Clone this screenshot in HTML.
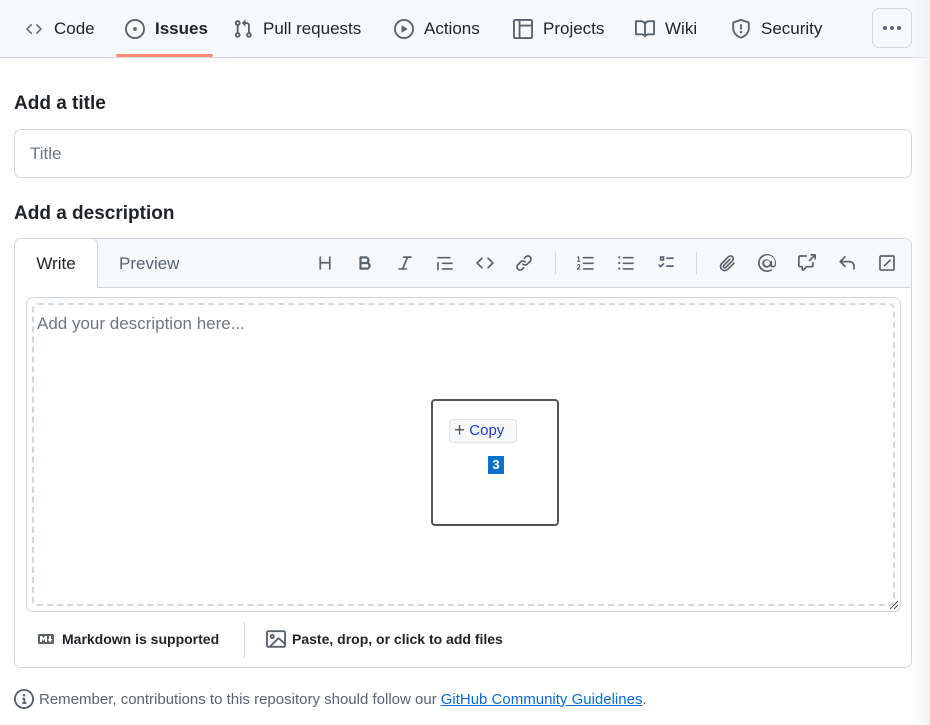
<!DOCTYPE html>
<html><head><meta charset="utf-8"><style>
*{box-sizing:border-box;margin:0;padding:0}
body{width:930px;height:725px;overflow:hidden;background:#fff;font-family:"Liberation Sans",sans-serif;color:#1f2328;position:relative}
.nav{position:absolute;left:0;top:0;width:930px;height:58px;background:#f6f8fa;border-bottom:1px solid #d0d7de}
.tab{position:absolute;top:0;height:57px;display:flex;align-items:center;font-size:17px;color:#1f2328}
.tab svg{margin-right:10px}
.ul{position:absolute;left:116px;top:54px;width:97px;height:3px;background:#fd8c73;border-radius:2px}
.more{position:absolute;left:872px;top:8px;width:40px;height:40px;border:1px solid #d0d7de;border-radius:7px;background:#f6f8fa;display:flex;align-items:center;justify-content:center;gap:3px}
.more i{width:4px;height:4px;border-radius:2px;background:#59636e}
.lbl{position:absolute;left:14px;font-size:19px;font-weight:bold;color:#1f2328}
.input{position:absolute;left:14px;top:129px;width:898px;height:49px;border:1px solid #d0d7de;border-radius:7px;padding:0 15px;line-height:47px;font-size:17px;color:#6e7781}
.ed{position:absolute;left:14px;top:238px;width:898px;height:430px;border:1px solid #d0d7de;border-radius:7px;overflow:hidden}
.edh{position:absolute;left:0;top:0;width:896px;height:49px;background:#f6f8fa;border-bottom:1px solid #d0d7de}
.wt{position:absolute;left:-1px;top:-1px;width:84px;height:50px;background:#fff;border:1px solid #d0d7de;border-bottom:none;border-radius:7px 7px 0 0;font-size:17px;text-align:center;line-height:50px}
.pv{position:absolute;left:104px;top:0;line-height:49px;font-size:17px;color:#59636e}
.ic{position:absolute;top:15px}
.sep{position:absolute;top:13px;width:1px;height:22px;background:#d0d7de}
.ta{position:absolute;left:11px;top:58px;width:875px;height:315px;border:1px solid #d0d7de;border-radius:7px}
.dash{position:absolute;left:5px;top:5px;width:863px;height:303px;border:2px dashed #d0d7de;border-radius:6px}
.ph{position:absolute;left:22px;top:75px;font-size:17px;color:#6e7781}
.ft{position:absolute;top:388px;height:24px;font-size:14px;font-weight:bold;display:flex;align-items:center;color:#1f2328}
.note{position:absolute;left:14px;top:689px;font-size:15px;color:#59636e;display:flex;align-items:center}
.note a{color:#0969da;text-decoration:underline;margin-left:4px}
</style></head><body>
<div class="nav">
<div class="tab" style="left:24px"><svg width="20" height="16" viewBox="0 0 16 16" fill="#59636e"><path d="m11.28 3.22 4.25 4.25a.75.75 0 0 1 0 1.06l-4.25 4.25a.749.749 0 0 1-1.275-.326.749.749 0 0 1 .215-.734L13.94 8l-3.72-3.720a.749.749 0 0 1 .326-1.275.749.749 0 0 1 .734.215Zm-6.56 0a.751.751 0 0 1 1.042.018.751.751 0 0 1 .018 1.042L2.060 8l3.72 3.72a.749.749 0 0 1-.326 1.275.749.749 0 0 1-.734-.215L.47 8.53a.75.75 0 0 1 0-1.06Z"/></svg>Code</div>
<div class="tab" style="left:125px;font-weight:bold"><svg width="20" height="20" viewBox="0 0 16 16" fill="#59636e"><path d="M8 9.5a1.5 1.5 0 1 0 0-3 1.5 1.5 0 0 0 0 3Z"/><path d="M8 0a8 8 0 1 1 0 16A8 8 0 0 1 8 0ZM1.5 8a6.5 6.5 0 1 0 13 0 6.5 6.5 0 0 0-13 0Z"/></svg>Issues</div>
<div class="tab" style="left:233px"><svg width="20" height="20" viewBox="0 0 16 16" fill="#59636e"><path d="M1.5 3.25a2.25 2.25 0 1 1 3 2.122v5.256a2.251 2.251 0 1 1-1.5 0V5.372A2.25 2.25 0 0 1 1.5 3.25Zm5.677-.177L9.573.677A.25.25 0 0 1 10 .854V2.5h1A2.5 2.5 0 0 1 13.5 5v5.628a2.251 2.251 0 1 1-1.5 0V5a1 1 0 0 0-1-1h-1v1.646a.25.25 0 0 1-.427.177L7.177 3.427a.25.25 0 0 1 0-.354ZM3.75 2.5a.75.75 0 1 0 0 1.5.75.75 0 0 0 0-1.5Zm0 9.5a.75.75 0 1 0 0 1.5.75.75 0 0 0 0-1.5Zm8.25.75a.75.75 0 1 0 1.5 0 .75.75 0 0 0-1.5 0Z"/></svg>Pull requests</div>
<div class="tab" style="left:394px"><svg width="20" height="20" viewBox="0 0 16 16" fill="#59636e"><path d="M8 0a8 8 0 1 1 0 16A8 8 0 0 1 8 0ZM1.5 8a6.5 6.5 0 1 0 13 0 6.5 6.5 0 0 0-13 0Zm4.879-2.773 4.264 2.559a.25.25 0 0 1 0 .428l-4.264 2.559A.25.25 0 0 1 6 10.559V5.442a.25.25 0 0 1 .379-.215Z"/></svg>Actions</div>
<div class="tab" style="left:513px"><svg width="20" height="20" viewBox="0 0 16 16" fill="#59636e"><path d="M1.75 0h12.5C15.216 0 16 .784 16 1.75v12.5A1.75 1.75 0 0 1 14.25 16H1.75A1.75 1.75 0 0 1 0 14.25V1.75C0 .784.784 0 1.75 0ZM1.5 1.750v12.5c0 .138.112.25.25.25H4.5v-13H1.75a.25.25 0 0 0-.25.25ZM6 14.5h8.25a.25.25 0 0 0 .25-.25V6H6Zm8.5-10v-2.75a.25.25 0 0 0-.25-.25H6v3Z"/></svg>Projects</div>
<div class="tab" style="left:635px"><svg width="20" height="20" viewBox="0 0 16 16" fill="#59636e"><path d="M0 1.75A.75.75 0 0 1 .75 1h4.253c1.227 0 2.317.59 3 1.501A3.743 3.743 0 0 1 11.006 1h4.245a.75.75 0 0 1 .75.75v10.5a.75.75 0 0 1-.75.75h-4.507a2.25 2.25 0 0 0-1.591.659l-.622.621a.75.75 0 0 1-1.06 0l-.622-.621A2.25 2.25 0 0 0 5.258 13H.75a.75.75 0 0 1-.75-.75Zm7.251 10.324.004-5.073-.002-2.253A2.25 2.25 0 0 0 5.003 2.5H1.5v9h3.757a3.75 3.75 0 0 1 1.994.574ZM8.755 4.75l-.004 7.322a3.752 3.752 0 0 1 1.992-.572H14.5v-9h-3.495a2.25 2.25 0 0 0-2.25 2.25Z"/></svg>Wiki</div>
<div class="tab" style="left:731px"><svg width="20" height="20" viewBox="0 0 16 16" fill="#59636e"><path d="M7.467.133a1.748 1.748 0 0 1 1.066 0l5.25 1.68A1.75 1.75 0 0 1 15 3.48V7c0 1.566-.32 3.182-1.303 4.682-.983 1.498-2.585 2.813-5.032 3.855a1.697 1.697 0 0 1-1.33 0c-2.447-1.042-4.049-2.357-5.032-3.855C1.32 10.182 1 8.566 1 7V3.48a1.755 1.755 0 0 1 1.217-1.667Zm.61 1.429a.25.25 0 0 0-.153 0l-5.25 1.68a.25.25 0 0 0-.174.238V7c0 1.358.275 2.666 1.057 3.86.784 1.194 2.121 2.34 4.366 3.297a.196.196 0 0 0 .154 0c2.245-.956 3.582-2.104 4.366-3.298C13.225 9.666 13.5 8.36 13.5 7V3.48a.251.251 0 0 0-.174-.237l-5.25-1.68ZM8.75 4.75v3a.75.75 0 0 1-1.5 0v-3a.75.75 0 0 1 1.5 0ZM9 10.5a1 1 0 1 1-2 0 1 1 0 0 1 2 0Z"/></svg>Security</div>
<div class="ul"></div>
<div class="more"><i></i><i></i><i></i></div>
</div>
<div class="lbl" style="top:93px">Add a title</div>
<div class="input">Title</div>
<div class="lbl" style="top:203px">Add a description</div>
<div class="ed">
<div class="edh">
<div class="wt">Write</div><div class="pv">Preview</div>
<svg class="ic" style="left:301px" width="18" height="18" viewBox="0 0 16 16" fill="#59636e"><path d="M3.75 2a.75.75 0 0 1 .75.75V7h7V2.75a.75.75 0 0 1 1.5 0v10.5a.75.75 0 0 1-1.5 0V8.5h-7v4.75a.75.75 0 0 1-1.5 0V2.75A.75.75 0 0 1 3.75 2Z"/></svg>
<svg class="ic" style="left:341px" width="18" height="18" viewBox="0 0 16 16" fill="#59636e"><path d="M4 2h4.5a3.501 3.501 0 0 1 2.852 5.53A3.499 3.499 0 0 1 9.5 14H4a1 1 0 0 1-1-1V3a1 1 0 0 1 1-1Zm1 7v3h4.5a1.5 1.5 0 0 0 0-3Zm3.5-2a1.5 1.5 0 0 0 0-3H5v3Z"/></svg>
<svg class="ic" style="left:381px" width="18" height="18" viewBox="0 0 16 16" fill="#59636e"><path d="M6 2.75A.75.75 0 0 1 6.75 2h6.5a.75.75 0 0 1 0 1.5h-2.505l-3.858 9H9.25a.75.75 0 0 1 0 1.5h-6.5a.75.75 0 0 1 0-1.5h2.505l3.858-9H6.75A.75.75 0 0 1 6 2.75Z"/></svg>
<svg class="ic" style="left:420px" width="20" height="18" viewBox="0 0 16 16" fill="#59636e"><path d="M1.75 2.5h10.5a.75.75 0 0 1 0 1.5H1.75a.75.75 0 0 1 0-1.5Zm4 5h8.5a.75.75 0 0 1 0 1.5h-8.5a.75.75 0 0 1 0-1.5Zm0 5h8.5a.75.75 0 0 1 0 1.5h-8.5a.75.75 0 0 1 0-1.5ZM2.5 7.75v6a.75.75 0 0 1-1.5 0v-6a.75.75 0 0 1 1.5 0Z"/></svg>
<svg class="ic" style="left:460px" width="20" height="18" viewBox="0 0 16 16" fill="#59636e"><path d="m11.28 3.22 4.25 4.25a.75.75 0 0 1 0 1.06l-4.25 4.25a.749.749 0 0 1-1.06-1.06L13.94 8l-3.72-3.72a.749.749 0 0 1 1.06-1.06Zm-6.56 0a.75.75 0 0 1 1.06 1.06L2.06 8l3.72 3.72a.749.749 0 0 1-1.06 1.06L.47 8.53a.75.75 0 0 1 0-1.06Z"/></svg>
<svg class="ic" style="left:500px" width="18" height="18" viewBox="0 0 16 16" fill="#59636e"><path d="m7.775 3.275 1.25-1.25a3.5 3.5 0 1 1 4.95 4.95l-2.5 2.5a3.5 3.5 0 0 1-4.95 0 .751.751 0 0 1 .018-1.042.751.751 0 0 1 1.042-.018 1.998 1.998 0 0 0 2.83 0l2.5-2.5a2.002 2.002 0 0 0-2.83-2.83l-1.25 1.25a.751.751 0 0 1-1.042-.018.751.751 0 0 1-.018-1.042Zm-4.69 9.64a1.998 1.998 0 0 0 2.83 0l1.25-1.25a.751.751 0 0 1 1.042.018.751.751 0 0 1 .018 1.042l-1.25 1.25a3.5 3.5 0 1 1-4.95-4.95l2.5-2.5a3.5 3.5 0 0 1 4.95 0 .751.751 0 0 1-.018 1.042.751.751 0 0 1-1.042.018 1.998 1.998 0 0 0-2.83 0l-2.5 2.5a1.998 1.998 0 0 0 0 2.83Z"/></svg>
<div class="sep" style="left:540px"></div>
<svg class="ic" style="left:561px" width="20" height="18" viewBox="0 0 16 16" fill="#59636e"><path d="M5 3.25a.75.75 0 0 1 .75-.75h8.5a.75.75 0 0 1 0 1.5h-8.5A.75.75 0 0 1 5 3.25Zm0 5a.75.75 0 0 1 .75-.75h8.5a.75.75 0 0 1 0 1.5h-8.5A.75.75 0 0 1 5 8.25Zm0 5a.75.75 0 0 1 .75-.75h8.5a.75.75 0 0 1 0 1.5h-8.5a.75.75 0 0 1-.75-.75ZM.924 10.32a.5.5 0 0 1-.851-.525l.001-.001.001-.002.002-.004.007-.011c.097-.144.215-.273.348-.384.228-.19.588-.392 1.068-.392.468 0 .858.181 1.126.484.259.294.377.673.377 1.038 0 .987-.686 1.495-1.156 1.845l-.047.035c-.303.225-.522.4-.654.597h1.357a.5.5 0 0 1 0 1H.5a.5.5 0 0 1-.5-.5c0-1.005.692-1.52 1.167-1.875l.035-.025c.531-.396.8-.625.8-1.078a.57.57 0 0 0-.128-.376C1.806 10.068 1.695 10 1.5 10a.658.658 0 0 0-.429.163.835.835 0 0 0-.144.153ZM2.003 2.5V6h.503a.5.5 0 0 1 0 1H.5a.5.5 0 0 1 0-1h.503V3.308l-.28.14a.5.5 0 0 1-.446-.895l1.003-.5a.5.5 0 0 1 .723.447Z"/></svg>
<svg class="ic" style="left:601px" width="20" height="18" viewBox="0 0 16 16" fill="#59636e"><path d="M5.75 2.5h8.5a.75.75 0 0 1 0 1.5h-8.5a.75.75 0 0 1 0-1.5Zm0 5h8.5a.75.75 0 0 1 0 1.5h-8.5a.75.75 0 0 1 0-1.5Zm0 5h8.5a.75.75 0 0 1 0 1.5h-8.5a.75.75 0 0 1 0-1.5ZM2 14a1 1 0 1 1 0-2 1 1 0 0 1 0 2Zm1-6a1 1 0 1 1-2 0 1 1 0 0 1 2 0ZM2 4a1 1 0 1 1 0-2 1 1 0 0 1 0 2Z"/></svg>
<svg class="ic" style="left:641px" width="20" height="18" viewBox="0 0 16 16" fill="#59636e"><path d="M2.5 2h4v4h-4ZM4 3.5v1h1v-1Z"/><path d="M8.75 3h5.5a.75.75 0 0 1 0 1.5h-5.5a.75.75 0 0 1 0-1.5Zm0 7h5.5a.75.75 0 0 1 0 1.5h-5.5a.75.75 0 0 1 0-1.5ZM6.28 9.28 3.78 11.78a.75.75 0 0 1-1.06 0l-1.25-1.25a.75.75 0 0 1 1.06-1.06l.72.72 1.97-1.97a.75.75 0 0 1 1.06 1.06Z"/></svg>
<div class="sep" style="left:681px"></div>
<svg class="ic" style="left:702px" width="20" height="18" viewBox="0 0 16 16" fill="#59636e"><path d="M12.212 3.02a1.753 1.753 0 0 0-2.478.003l-5.83 5.83a3.007 3.007 0 0 0-.88 2.127c0 .795.315 1.551.88 2.116.567.567 1.333.89 2.126.89.79 0 1.548-.321 2.116-.89l5.48-5.48a.75.75 0 0 1 1.061 1.06l-5.48 5.48a4.492 4.492 0 0 1-3.177 1.33c-1.2 0-2.345-.487-3.187-1.33a4.483 4.483 0 0 1-1.32-3.177c0-1.195.475-2.341 1.32-3.186l5.83-5.83a3.25 3.25 0 0 1 5.553 2.297c0 .863-.343 1.691-.953 2.301L7.439 12.39c-.375.377-.884.59-1.416.593a1.998 1.998 0 0 1-1.412-.593 1.992 1.992 0 0 1 0-2.828l5.48-5.48a.751.751 0 0 1 1.042.018.751.751 0 0 1 .018 1.042l-5.48 5.48a.492.492 0 0 0 0 .707.499.499 0 0 0 .352.154.51.51 0 0 0 .356-.154l5.833-5.827a1.755 1.755 0 0 0 0-2.481Z"/></svg>
<svg class="ic" style="left:742px" width="20" height="18" viewBox="0 0 16 16" fill="#59636e"><path d="M4.75 2.37a6.501 6.501 0 0 0 6.5 11.26.75.75 0 0 1 .75 1.298A7.999 7.999 0 0 1 .989 4.148 8 8 0 0 1 16 7.75v1.5a2.75 2.75 0 0 1-5.072 1.475 3.999 3.999 0 0 1-6.650-4.388 4 4 0 0 1 6.722.386V6.75a.75.75 0 0 1 1.5 0v2.5a1.25 1.25 0 0 0 2.5 0v-1.5A6.5 6.5 0 0 0 4.75 2.37ZM10.5 8a2.5 2.5 0 1 0-5 0 2.5 2.5 0 0 0 5 0Z"/></svg>
<svg class="ic" style="left:782px" width="20" height="18" viewBox="0 0 16 16" fill="#59636e"><path d="M1.75 1h5.5a.75.75 0 0 1 0 1.5h-5.5a.25.25 0 0 0-.25.25v7.5c0 .138.112.25.25.25h2a.75.75 0 0 1 .75.75v2.19l2.72-2.72a.749.749 0 0 1 .53-.22h4.5a.25.25 0 0 0 .25-.25v-2.5a.75.75 0 0 1 1.5 0v2.5A1.75 1.75 0 0 1 12.25 12H8.06l-2.573 2.573A1.458 1.458 0 0 1 3 13.543V12H1.75A1.75 1.75 0 0 1 0 10.25v-7.5C0 1.784.784 1 1.75 1ZM11 .75a.75.75 0 0 1 .75-.75h3.5a.75.75 0 0 1 .75.75v3.5a.75.75 0 0 1-1.5 0V2.56l-3.72 3.72a.749.749 0 1 1-1.060-1.06L13.44 1.5h-1.69A.75.75 0 0 1 11 .75Z"/></svg>
<svg class="ic" style="left:822px" width="20" height="18" viewBox="0 0 16 16" fill="#59636e"><path d="M6.78 1.97a.75.75 0 0 1 0 1.06L3.81 6h6.44A4.75 4.75 0 0 1 15 10.75v2.5a.75.75 0 0 1-1.5 0v-2.5a3.25 3.25 0 0 0-3.25-3.25H3.81l2.97 2.97a.749.749 0 0 1-1.06 1.06L1.47 7.28a.75.75 0 0 1 0-1.06l4.25-4.25a.75.75 0 0 1 1.06 0Z"/></svg>
<svg class="ic" style="left:862px" width="20" height="18" viewBox="0 0 16 16" fill="#59636e"><path d="M2.75 1h10.5c.966 0 1.75.784 1.75 1.75v10.5A1.75 1.75 0 0 1 13.25 15H2.75A1.75 1.75 0 0 1 1 13.25V2.75C1 1.784 1.784 1 2.75 1Zm10.5 1.5H2.75a.25.25 0 0 0-.25.25v10.5c0 .138.112.25.25.25h10.5a.25.25 0 0 0 .25-.25V2.75a.25.25 0 0 0-.25-.25ZM10.22 4.97a.75.75 0 1 1 1.06 1.06l-5 5a.75.75 0 0 1-1.06-1.06Z"/></svg>
</div>
<div class="ta"><div class="dash"></div>
<div style="position:absolute;right:2px;bottom:2px;width:8px;height:8px;background:linear-gradient(135deg,transparent 45%,#555 45%,#555 55%,transparent 55%,transparent 70%,#555 70%,#555 80%,transparent 80%)"></div></div>
<div class="ph">Add your description here...</div>
<div style="position:absolute;left:416px;top:160px;width:128px;height:127px;border:2px solid #555;border-radius:4px;background:#fff">
<div style="position:absolute;left:16px;top:18px;width:68px;height:24px;border:1px solid #e1e4e8;border-radius:4px;background:#f6f8fa;font-size:15px;color:#1a3cd8;line-height:22px;padding-left:4px"><span style="color:#555;font-size:19px;vertical-align:-1px">+</span> Copy</div>
<div style="position:absolute;left:55px;top:55px;width:16px;height:18px;background:#0a72c8;color:#fff;font-weight:bold;font-size:13px;text-align:center;line-height:18px">3</div>
</div>
<div class="ft" style="left:21px"><svg width="20" height="16" viewBox="0 0 16 16" fill="#59636e" style="margin-right:6px"><path d="M14.85 3c.63 0 1.15.52 1.14 1.15v7.7c0 .63-.51 1.15-1.150 1.15H1.15C.52 13 0 12.48 0 11.84V4.15C0 3.52.52 3 1.15 3ZM9 11V5H7L5.5 7 4 5H2v6h2V8l1.5 1.92L7 8v3Zm2.99.5L14.5 8H13V5h-2v3H9.5Z"/></svg>Markdown is supported</div>
<div style="position:absolute;left:229px;top:383px;width:1px;height:36px;background:#d0d7de"></div>
<div class="ft" style="left:251px"><svg width="20" height="20" viewBox="0 0 16 16" fill="#59636e" style="margin-right:6px"><path d="M16 13.25A1.75 1.75 0 0 1 14.25 15H1.75A1.75 1.75 0 0 1 0 13.25V2.75C0 1.784.784 1 1.75 1h12.5c.966 0 1.75.784 1.75 1.75ZM1.75 2.5a.25.25 0 0 0-.25.25v10.5c0 .138.112.25.25.25h.94l.03-.03 6.077-6.078a1.75 1.75 0 0 1 2.412-.06L14.5 10.31V2.75a.25.25 0 0 0-.25-.25Zm12.5 11a.25.25 0 0 0 .25-.25v-.917l-4.298-3.889a.25.25 0 0 0-.344.009L4.81 13.5ZM7 6a2 2 0 1 1-3.999.001A2 2 0 0 1 7 6ZM5.5 6a.5.5 0 1 0-1 0 .5.5 0 0 0 1 0Z"/></svg>Paste, drop, or click to add files</div>
</div>
<div class="note"><svg width="20" height="20" viewBox="0 0 16 16" fill="#59636e" style="margin-right:5px"><path d="M0 8a8 8 0 1 1 16 0A8 8 0 0 1 0 8Zm8-6.5a6.5 6.5 0 1 0 0 13 6.5 6.5 0 0 0 0-13ZM6.5 7.75A.75.75 0 0 1 7.25 7h1a.75.75 0 0 1 .75.75v2.75h.25a.75.75 0 0 1 0 1.5h-2a.75.75 0 0 1 0-1.5h.25v-2h-.25a.75.75 0 0 1-.75-.75ZM8 6a1 1 0 1 1 0-2 1 1 0 0 1 0 2Z"/></svg>Remember, contributions to this repository should follow our<a>GitHub Community Guidelines</a>.</div>
<div style="position:absolute;left:912px;top:0;width:18px;height:725px;background:linear-gradient(90deg,rgba(240,242,245,0),#f0f2f5)"></div>
</body></html>
